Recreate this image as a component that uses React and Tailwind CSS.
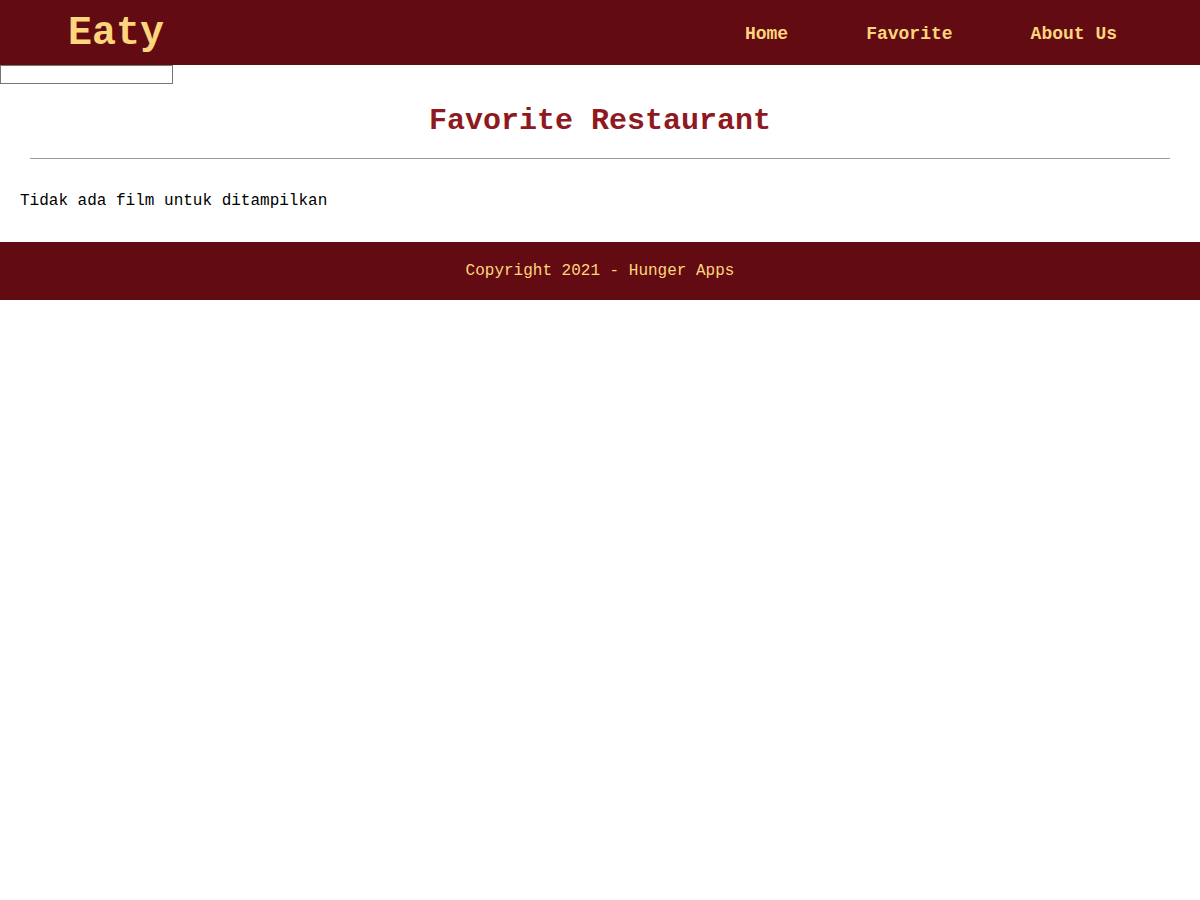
export default function App() {
  const links = ["Home", "Favorite", "About Us"];

  return (
    <div className="min-h-screen bg-white font-['Liberation_Mono','Courier_New',monospace]">
      {/* Header */}
      <header className="h-[65px] bg-[#630b12] flex items-center justify-between pl-[68px] pr-[44px] pt-[3px]">
        <h1 className="text-[40px] font-bold text-[#fdd57d] leading-none">Eaty</h1>
        <nav className="flex">
          {links.map((l) => (
            <a key={l} href="#" className="px-[39px] text-[18px] font-bold text-[#fdd57d]">
              {l}
            </a>
          ))}
        </nav>
      </header>

      <input type="text" className="block w-[173px] h-[19px] border border-[#767676] bg-white" />

      <main>
        <h2 className="text-center text-[30px] font-bold text-[#8e1a1f] pt-[20px] leading-[34px]">
          Favorite Restaurant
        </h2>
        <hr className="mx-[30px] mt-[20px] border-t border-[#9a9a9a]" />
        <p className="px-[20px] pt-[33px] pb-[31px] text-[16px] text-black leading-[19px]">
          Tidak ada film untuk ditampilkan
        </p>
      </main>

      <footer className="h-[58px] bg-[#630b12] flex items-center justify-center">
        <p className="text-[16px] text-[#fdd57d]">Copyright 2021 - Hunger Apps</p>
      </footer>
    </div>
  );
}
